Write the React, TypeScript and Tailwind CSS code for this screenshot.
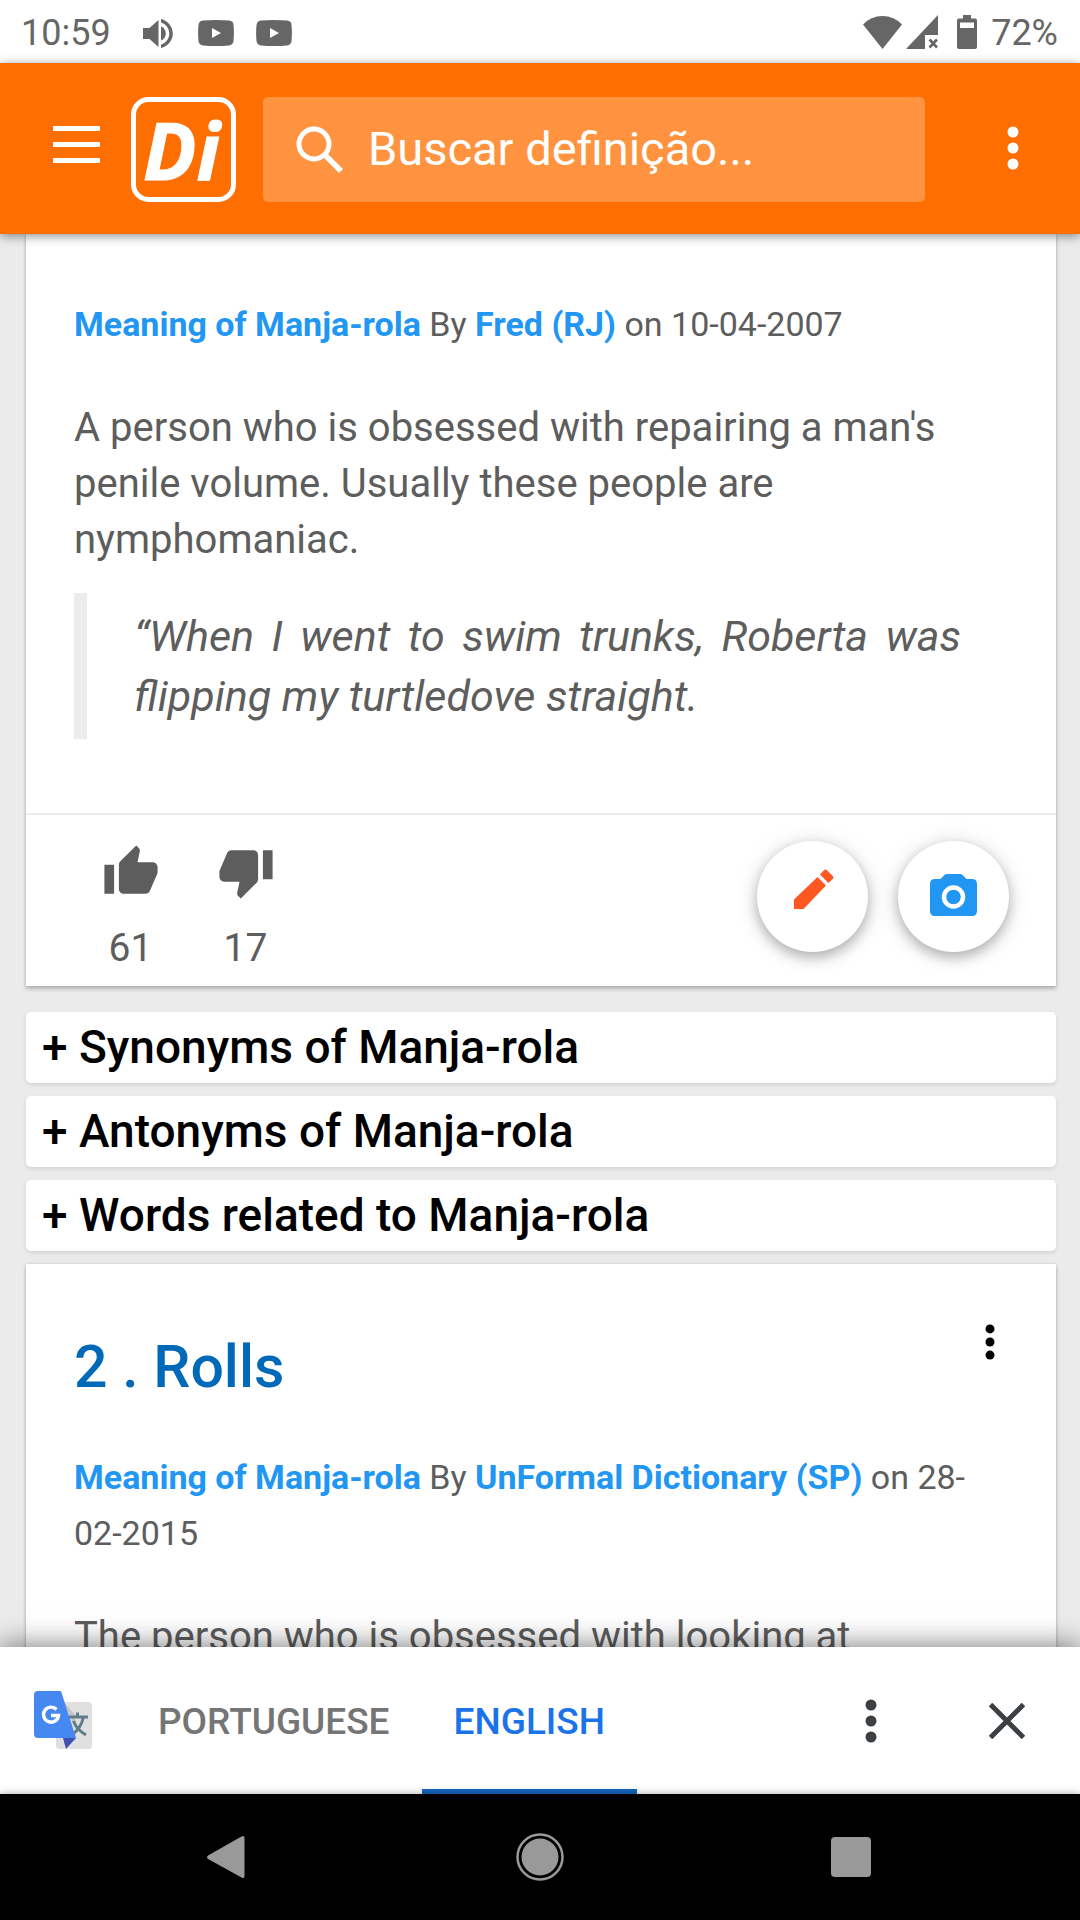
import type { ReactNode } from "react";

function Dots({ className }: { className: string }) {
  return (
    <svg viewBox="0 0 12 44" className={className} fill="currentColor" aria-hidden="true">
      <circle cx="6" cy="6" r="5.5" />
      <circle cx="6" cy="22" r="5.5" />
      <circle cx="6" cy="38" r="5.5" />
    </svg>
  );
}

function VideoIcon() {
  return (
    <svg viewBox="0 0 36 26" className="h-[26px] w-9" aria-hidden="true">
      <path
        fill="#666"
        fillRule="evenodd"
        d="M5 .6Q18-.4 31 .6q4.500.4 4.500 4.400.8 8 0 16-.4 4-4.500 4.400-13 1-26 0Q.9 25 .5 21q-.8-8 0-16Q.9 1 5 .6ZM14 8v10l9-5Z"
      />
    </svg>
  );
}

function StatusBar() {
  return (
    <div className="flex h-[63px] shrink-0 items-center justify-between bg-white pt-[2px] pr-[22px] pl-[21px] text-[36px] text-[#666]">
      <div className="flex items-center">
        <span className="w-[92px]">10:59</span>
        <svg viewBox="0 0 30 30" className="ml-[30px] h-[30px] w-[30px]" fill="#666" aria-hidden="true">
          <path d="M0 10v11h6.500L15.500 29V2L6.500 10Z" />
          <path d="M18 8.500c3 1 4.800 3.700 4.800 7s-1.800 6-4.800 7Z" />
          <path d="M18 1v3.400c4.800 1.400 8.300 5.800 8.300 11.100s-3.500 9.700-8.300 11.100V30c6.700-1.500 11.800-7.500 11.800-14.500S24.700 2.500 18 1Z" />
        </svg>
        <span className="ml-[25px] flex gap-[22px]">
          <VideoIcon />
          <VideoIcon />
        </span>
      </div>
      <div className="flex items-center">
        <svg viewBox="0 0 39 34" className="mr-1 mb-[2px] h-[34px] w-[39px]" fill="#666" aria-hidden="true">
          <path d="M0 9.500Q8 1 19.500 1T39 9.500L19.500 34Z" />
        </svg>
        <svg viewBox="0 0 32 34" className="mr-[19px] mb-[2px] h-[34px] w-8" aria-hidden="true">
          <path fill="#666" d="M32 0v20H19v14H0Z" />
          <path d="m23.500 24.500 7.500 8m0-8-7.500 8" stroke="#666" strokeWidth="2.600" />
        </svg>
        <svg viewBox="0 0 20 34" className="mr-[14px] mb-[2px] h-[34px] w-5" aria-hidden="true">
          <path
            fill="#666"
            fillRule="evenodd"
            d="M6 0h8v3.500h4q2 0 2 2V32q0 2-2 2H2q-2 0-2-2V5.500q0-2 2-2h4ZM3 7.500V13h14V7.500Z"
          />
        </svg>
        <span>72%</span>
      </div>
    </div>
  );
}

function Header() {
  return (
    <header className="relative z-10 flex h-[171px] shrink-0 items-center bg-[#ff6e00] pt-[2px] pr-[61px] pl-[53px] shadow-[0_2px_10px_rgba(0,0,0,0.45)]">
      <button aria-label="Menu" className="mb-[10px] flex w-[47px] flex-col gap-[11px]">
        <span className="h-[5px] bg-white" />
        <span className="h-[5px] bg-white" />
        <span className="h-[5px] bg-white" />
      </button>
      <a href="#home" aria-label="Início" className="ml-[31px] block">
        <svg viewBox="0 0 105 105" className="h-[105px] w-[105px]">
          <rect x="2.500" y="2.500" width="100" height="100" rx="15" fill="none" stroke="#fff" strokeWidth="5" />
          <text
            x="12"
            y="83"
            fill="#fff"
            stroke="#fff"
            strokeWidth="1"
            fontFamily="'Open Sans', 'Noto Sans', sans-serif"
            fontSize="79"
            fontStyle="italic"
            fontWeight="700"
          >
            Di
          </text>
        </svg>
      </a>
      <label className="ml-[27px] flex h-[105px] flex-1 items-center rounded-[5px] bg-[#ff9340] pl-[33px]">
        <svg viewBox="0 0 48 48" className="h-12 w-12 shrink-0" fill="none" stroke="#fff" strokeWidth="5" aria-hidden="true">
          <circle cx="18" cy="18" r="15" />
          <path d="m29 29 16 16" strokeWidth="5.500" />
        </svg>
        <input
          type="text"
          aria-label="Buscar definição"
          placeholder="Buscar definição..."
          className="ml-6 w-full min-w-0 bg-transparent text-[47px] text-white outline-none placeholder:text-white placeholder:opacity-100"
        />
      </label>
      <button aria-label="Mais opções" className="mb-[3px] ml-[82px] text-white">
        <Dots className="h-11 w-3" />
      </button>
    </header>
  );
}

function Meta({ author, date }: { author: string; date: string }) {
  return (
    <p className="text-[34px] leading-[56px] text-[#5d5d5d]">
      <a href="#meaning" className="font-bold text-[#2196f3]">
        Meaning of Manja-rola
      </a>{" "}
      By{" "}
      <a href="#author" className="font-bold text-[#2196f3]">
        {author}
      </a>{" "}
      on {date}
    </p>
  );
}

function Card({ children }: { children: ReactNode }) {
  return (
    <article className="bg-white shadow-[0_3px_4px_rgba(0,0,0,0.22),0_0_3px_rgba(0,0,0,0.14)]">{children}</article>
  );
}

function Vote({ label, count, children }: { label: string; count: number; children: ReactNode }) {
  return (
    <button aria-label={label} className="flex w-[63px] flex-col items-center gap-[25px]">
      {children}
      <span className="text-[39px] leading-[44px]">{count}</span>
    </button>
  );
}

function Fab({ label, children }: { label: string; children: ReactNode }) {
  return (
    <button
      aria-label={label}
      className="flex h-[111px] w-[111px] items-center justify-center rounded-full bg-white shadow-[0_5px_13px_rgba(0,0,0,0.28),0_2px_26px_rgba(0,0,0,0.1)]"
    >
      {children}
    </button>
  );
}

function FirstDefinition() {
  return (
    <Card>
      <div className="px-12 pt-[62px] pb-[74px]">
        <Meta author="Fred (RJ)" date="10-04-2007" />
        <p className="mt-12 text-[40px] leading-[56px] text-[#5d5d5d]">
          A person who is obsessed with repairing a man's penile volume. Usually these people are nymphomaniac.
        </p>
        <blockquote className="mt-[25px] mr-[47px] border-l-[13px] border-[#ececec] py-[13px] pl-[47px] text-justify text-[43px] leading-[60px] text-[#5d5d5d] italic">
          “When I went to swim trunks, Roberta was flipping my turtledove straight.
        </blockquote>
      </div>
      <div className="flex justify-between border-t-2 border-[#ececec] pr-[47px] pb-4 pl-[73px] text-[#5d5d5d]">
        <div className="flex gap-[52px] pt-[28px]">
          <Vote label="Gostei" count={61}>
            <svg viewBox="0 0 24 24" className="h-[58px] w-[58px]" fill="currentColor" aria-hidden="true">
              <path d="M1 21h4V9H1v12zm22-11c0-1.100-.9-2-2-2h-6.310l.95-4.570.03-.32c0-.41-.17-.79-.44-1.060L14.170 1 7.590 7.590C7.220 7.950 7 8.450 7 9v10c0 1.100.9 2 2 2h9c.83 0 1.540-.5 1.840-1.220l3.020-7.050c.09-.23.14-.47.14-.73v-2z" />
            </svg>
          </Vote>
          <Vote label="Não gostei" count={17}>
            <svg viewBox="0 0 24 24" className="h-[58px] w-[58px]" fill="currentColor" aria-hidden="true">
              <path d="M15 3H6c-.83 0-1.540.5-1.840 1.220l-3.020 7.050c-.09.23-.14.47-.14.73v2c0 1.100.9 2 2 2h6.310l-.95 4.570-.03.32c0 .41.170.79.440 1.060L9.830 23l6.590-6.590c.36-.36.58-.86.58-1.410V5c0-1.100-.9-2-2-2zm4 0v12h4V3h-4z" />
            </svg>
          </Vote>
        </div>
        <div className="flex gap-[30px] pt-[26px]">
          <Fab label="Editar">
            <svg viewBox="0 0 40 40" className="mb-4 ml-[3px] h-10 w-10" fill="#ff5722" aria-hidden="true">
              <path d="m23.500 8 8.500 8.500L9.500 40H0v-9.500ZM26 5.500 30 1.300q1.500-1.500 3 0l5.700 5.700q1.500 1.500 0 3L34.500 14Z" />
            </svg>
          </Fab>
          <Fab label="Adicionar foto">
            <svg viewBox="0 0 47 42" className="mb-1 h-[42px] w-[47px]" aria-hidden="true">
              <path
                fill="#2196f3"
                d="M17 0h13q1.500 0 2.500 1l4 4H42q5 0 5 5v27q0 5-5 5H5q-5 0-5-5V10q0-5 5-5h5.500l4-4Q15.500 0 17 0Z"
              />
              <circle cx="23.500" cy="23" r="9.500" fill="none" stroke="#fff" strokeWidth="4.500" />
            </svg>
          </Fab>
        </div>
      </div>
    </Card>
  );
}

const sections = ["Synonyms of Manja-rola", "Antonyms of Manja-rola", "Words related to Manja-rola"];

function SecondDefinition() {
  return (
    <Card>
      <div className="px-12 pt-[68px]">
        <div className="flex items-start justify-between">
          <h2 className="text-[59px] leading-[70px] font-medium text-[#0069b8]">2 . Rolls</h2>
          <button aria-label="Opções da definição" className="mt-[-8px] mr-[13px] text-black">
            <Dots className="h-9 w-[10px]" />
          </button>
        </div>
        <div className="mt-[47px]">
          <Meta author="UnFormal Dictionary (SP)" date="28-02-2015" />
        </div>
        <p className="mt-12 text-[40px] leading-[56px] text-[#5d5d5d]">The person who is obsessed with looking at</p>
      </div>
    </Card>
  );
}

function TranslateBar() {
  return (
    <div className="relative z-10 flex h-[147px] shrink-0 bg-white pr-[55px] pl-[34px] shadow-[0_-2px_26px_rgba(0,0,0,0.5)]">
      <svg viewBox="0 0 58 58" className="mt-11 h-[58px] w-[58px]" role="img" aria-label="Google Tradutor">
        <rect x="22" y="11" width="36" height="47" rx="3.500" fill="#e0e0e0" />
        <path d="M30 11 41 24 42 40Z" fill="#c4c4c4" />
        <g fill="none" stroke="#607d8b" strokeWidth="3">
          <path d="M35 26h19M43.500 21.500V26M49.500 26q-2.500 11-11 17.500M39.500 30q3.500 9 12.500 14" />
        </g>
        <path d="M29 47h13L32 58Z" fill="#3f51b5" />
        <path d="M4 0h23l15 47H4q-4 0-4-4V4q0-4 4-4Z" fill="#4688f1" />
        <path d="M22.500 18.500a7.500 7.500 0 1 0 2 6h-7.500" fill="none" stroke="#fff" strokeWidth="3.400" />
      </svg>
      <div role="tablist" className="ml-[34px] flex text-[37px] font-medium">
        <button role="tab" aria-selected="false" className="px-8 pt-[6px] pb-[3px] text-[#757575]">
          PORTUGUESE
        </button>
        <button role="tab" aria-selected="true" className="border-b-[5px] border-[#1565c0] px-8 pt-[8px] text-[#1a73e8]">
          ENGLISH
        </button>
      </div>
      <div className="ml-auto flex items-center gap-[112px] text-[#3c4043]">
        <button aria-label="Opções de tradução">
          <Dots className="h-11 w-3" />
        </button>
        <button aria-label="Fechar">
          <svg viewBox="0 0 36 36" className="h-9 w-9" stroke="currentColor" strokeWidth="5" aria-hidden="true">
            <path d="m1.500 1.500 33 33m0-33-33 33" />
          </svg>
        </button>
      </div>
    </div>
  );
}

function NavigationBar() {
  return (
    <nav className="relative z-20 flex h-[126px] shrink-0 items-center justify-between bg-black px-[202px] shadow-[0_0_8px_rgba(0,0,0,0.35)]">
      <button aria-label="Voltar">
        <svg viewBox="0 0 50 50" className="h-[50px] w-[50px]" fill="#999" aria-hidden="true">
          <path d="M6 23.500 39.500 4.500q3-1.500 3 1.500v38q0 3-3 1.500L6 27q-2-1.700 0-3.500Z" />
        </svg>
      </button>
      <button aria-label="Início">
        <svg viewBox="0 0 50 50" className="h-[50px] w-[50px]" aria-hidden="true">
          <circle cx="25" cy="25" r="22.500" fill="none" stroke="#999" strokeWidth="2.500" />
          <circle cx="25" cy="25" r="18.500" fill="#999" />
        </svg>
      </button>
      <button aria-label="Recentes" className="flex h-[50px] w-[50px] items-center pl-[3px]">
        <span className="h-10 w-10 rounded-[4px] bg-[#999]" />
      </button>
    </nav>
  );
}

export default function App() {
  return (
    <div className="flex h-screen flex-col overflow-hidden bg-[#ebebeb] font-[Roboto,sans-serif]">
      <StatusBar />
      <Header />
      <main className="min-h-0 flex-1 overflow-hidden pr-[24px] pl-[26px]">
        <FirstDefinition />
        <div className="mt-[26px] mb-[13px] flex flex-col gap-[13px]">
          {sections.map((title) => (
            <button
              key={title}
              className="h-[71px] rounded-[5px] bg-white px-4 text-left text-[46px] leading-[71px] font-medium text-black shadow-[0_2px_4px_rgba(0,0,0,0.1)]"
            >
              + {title}
            </button>
          ))}
        </div>
        <SecondDefinition />
      </main>
      <TranslateBar />
      <NavigationBar />
    </div>
  );
}
